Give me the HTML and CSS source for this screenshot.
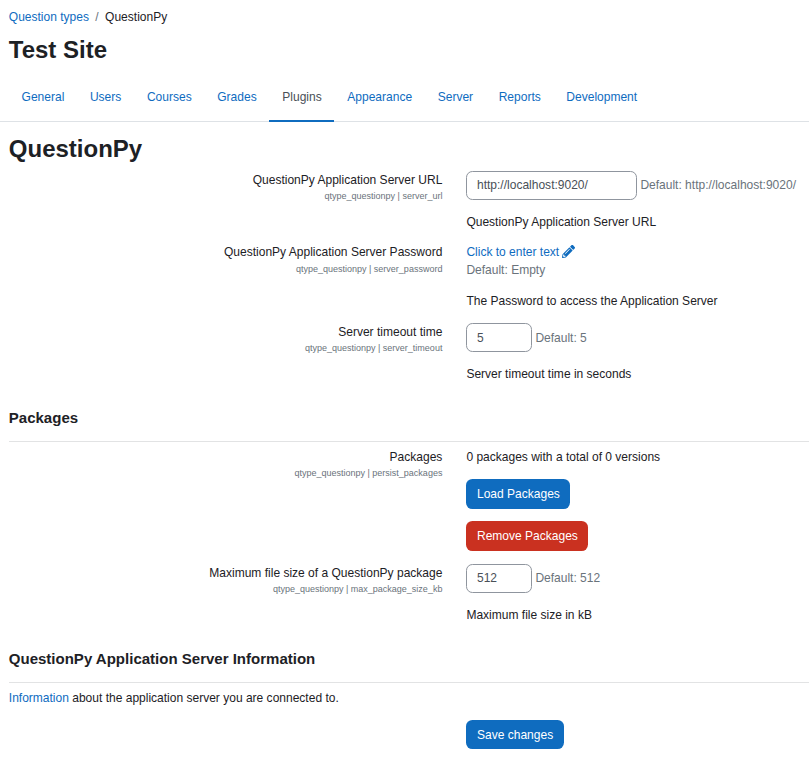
FILE: index.html
```html
<!DOCTYPE html>
<html lang="en">
<head>
<meta charset="utf-8">
<title>QuestionPy</title>
<link rel="stylesheet" href="styles.css">
</head>
<body>
<header class="page-header">
  <nav class="breadcrumb"><a href="#">Question types</a><span class="divider">/</span><span>QuestionPy</span></nav>
  <h1 class="title">Test Site</h1>
</header>
<nav class="tabs">
  <a class="tab" href="#">General</a>
  <a class="tab" href="#">Users</a>
  <a class="tab" href="#">Courses</a>
  <a class="tab" href="#">Grades</a>
  <a class="tab active" href="#">Plugins</a>
  <a class="tab" href="#">Appearance</a>
  <a class="tab" href="#">Server</a>
  <a class="tab" href="#">Reports</a>
  <a class="tab" href="#">Development</a>
</nav>
<main class="content">
  <h2 class="title section-title">QuestionPy</h2>
  <div class="row row-url">
    <div class="label">QuestionPy Application Server URL<small>qtype_questionpy | server_url</small></div>
    <div class="field">
      <div class="control"><input class="input wide" type="text" value="http://localhost:9020/"><span class="default">Default: http://localhost:9020/</span></div>
      <p class="description">QuestionPy Application Server URL</p>
    </div>
  </div>
  <div class="row row-password">
    <div class="label">QuestionPy Application Server Password<small>qtype_questionpy | server_password</small></div>
    <div class="field">
      <a class="edit" href="#">Click to enter text<svg class="pencil" viewBox="0 0 512 512"><path d="M498 142l-46 46c-5 5-12 5-17 0L324 77c-5-5-5-12 0-17l46-46c19-19 49-19 68 0l60 60c19 19 19 49 0 68zm-214-42L22 362 0 484c-3 16 12 30 28 28l122-22 262-262c5-5 5-12 0-17L301 100c-4-5-12-5-17 0zM124 340c-5-6-5-14 0-20l154-154c6-5 14-5 20 0s5 14 0 20L144 340c-6 5-14 5-20 0zm-36 84h48v36l-64 12-32-32 12-64h36v48z"/></svg></a>
      <div class="default empty">Default: Empty</div>
      <p class="description">The Password to access the Application Server</p>
    </div>
  </div>
  <div class="row row-timeout">
    <div class="label">Server timeout time<small>qtype_questionpy | server_timeout</small></div>
    <div class="field">
      <div class="control"><input class="input" type="text" value="5"><span class="default">Default: 5</span></div>
      <p class="description">Server timeout time in seconds</p>
    </div>
  </div>
  <h3 class="subheading">Packages</h3>
  <div class="row row-packages">
    <div class="label">Packages<small>qtype_questionpy | persist_packages</small></div>
    <div class="field">
      <div>0 packages with a total of 0 versions</div>
      <div class="actions">
        <button class="button">Load Packages</button>
        <button class="button danger">Remove Packages</button>
      </div>
    </div>
  </div>
  <div class="row">
    <div class="label">Maximum file size of a QuestionPy package<small>qtype_questionpy | max_package_size_kb</small></div>
    <div class="field">
      <div class="control"><input class="input" type="text" value="512"><span class="default">Default: 512</span></div>
      <p class="description">Maximum file size in kB</p>
    </div>
  </div>
  <h3 class="subheading">QuestionPy Application Server Information</h3>
  <p class="info"><a href="#">Information</a> about the application server you are connected to.</p>
  <div class="row">
    <div></div>
    <div class="field"><button class="button save">Save changes</button></div>
  </div>
</main>
</body>
</html>
```

FILE: styles.css
```css
* { box-sizing: border-box; }
body {
  margin: 0;
  overflow: hidden;
  background: #fff;
  color: #1d2125;
  font: 12.03px/18px "Liberation Sans", Arial, sans-serif;
}
a { color: #0f6cbf; text-decoration: none; }
h1, h2, h3, p { margin: 0; }
.page-header { padding: 8px 0 0 8.8px; }
.breadcrumb { display: flex; }
.divider { padding: 0 6.4px; color: #6a737b; }
.title { font-size: 24px; line-height: 29px; font-weight: 700; }
.page-header .title { margin-top: 9px; }
.tabs {
  display: flex;
  height: 50px;
  margin-top: 8px;
  padding-left: 8.8px;
  border-bottom: 1px solid #dee2e6;
}
.tab { height: 50px; padding: 16px 12.8px 0; border-bottom: 2px solid transparent; }
.tab.active { color: #495057; border-bottom-color: #0f6cbf; }
.content { padding-left: 8.8px; }
.section-title { margin: 12px 0 8px; }
.row { display: grid; grid-template-columns: 433.6px 1fr; column-gap: 24px; }
.label { text-align: right; }
.label small { display: block; font-size: 9px; line-height: 14px; color: #6a737b; }
.row-password small { padding-top: 1px; }
.field { min-width: 0; }
.control { display: flex; align-items: flex-start; height: 29px; white-space: nowrap; }
.input {
  width: 65.6px;
  height: 28.8px;
  padding: 0 9.6px;
  border: 1px solid #8f959e;
  border-radius: 6.4px;
  background: #fff;
  color: #495057;
  font: inherit;
}
.input.wide { width: 170.6px; }
.default { margin-left: 3.4px; padding-top: 5px; color: #6a737b; }
.default.empty { margin-left: 0; padding-top: 0; }
.row-timeout .default { padding-top: 6px; }
.row-timeout .input { padding-top: 1px; }
.description { margin-top: 13px; }
.row-url { margin-bottom: 12px; }
.row-password { margin-bottom: 13px; }
.edit { display: flex; align-items: flex-start; }
.pencil { width: 13px; height: 13px; margin: 2px 0 0 3.2px; fill: #0f6cbf; }
.subheading {
  height: 59px;
  margin-bottom: 6px;
  padding-top: 26px;
  border-bottom: 1px solid #e2e3e4;
  font-size: 15.03px;
  line-height: 18px;
}
.actions { display: flex; flex-direction: column; align-items: flex-start; gap: 12px; margin-top: 13px; }
.button {
  height: 30px;
  padding: 0 10.6px;
  border: 0;
  border-radius: 6.4px;
  background: #0f6cbf;
  color: #fff;
  font: inherit;
}
.button.danger { background: #ca3120; }
.button.save { display: block; height: 29px; }
.row-packages { margin-bottom: 13px; }
.info { margin-bottom: 13px; }
```
